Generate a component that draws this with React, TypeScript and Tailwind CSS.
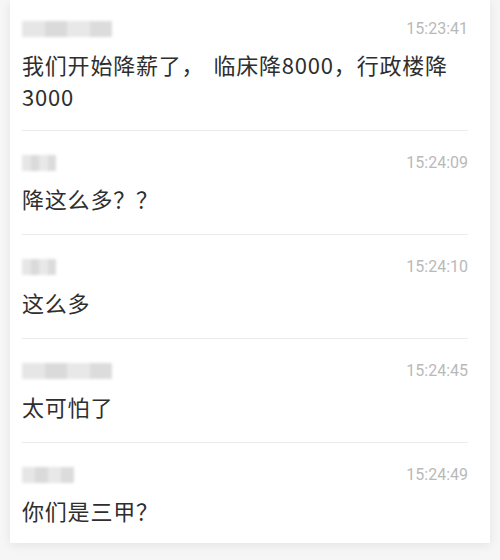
import React from "react";

type Msg = { nameW: number; time: string; text: React.ReactNode };

const msgs: Msg[] = [
  {
    nameW: 90,
    time: "15:23:41",
    text: (
      <>
        我们开始降薪了<span className="mr-[9px]">，</span>临床降8000，行政楼降3000
      </>
    ),
  },
  { nameW: 34, time: "15:24:09", text: "降这么多？？" },
  { nameW: 34, time: "15:24:10", text: "这么多" },
  { nameW: 90, time: "15:24:45", text: "太可怕了" },
  { nameW: 52, time: "15:24:49", text: "你们是三甲？" },
];

function BlurName({ w }: { w: number }) {
  return (
    <div className="relative h-[16px]" style={{ width: w }}>
      <div className="absolute inset-0 flex blur-[1.5px]">
        <div className="h-full flex-1 bg-[#e6e6e6]" />
        <div className="h-full flex-1 bg-[#dadada]" />
        <div className="h-full flex-1 bg-[#e8e8e8]" />
        <div className="h-full flex-1 bg-[#dcdcdc]" />
      </div>
    </div>
  );
}

export default function App() {
  return (
    <div
      className="min-h-[560px] w-[500px] bg-[#f6f6f6] pb-[17px]"
      style={{ fontFamily: '"Noto Sans CJK SC", "Noto Sans", sans-serif' }}
    >
      <div className="ml-[10px] w-[480px] bg-white px-[12px] shadow-[0_2px_10px_rgba(0,0,0,0.08)]">
        {msgs.map((m, i) => (
          <div
            key={i}
            className={
              (i === 0 ? "pt-[17px] pb-[18px] " : "pt-[20px] ") +
              (i === msgs.length - 1 ? "pb-[17px] " : "border-b border-[#ececec] ") +
              (i !== 0 && i !== msgs.length - 1 ? "pb-[20px] " : "") +
              "mr-[10px]"
            }
          >
            <div className="flex h-6 items-center justify-between">
              <BlurName w={m.nameW} />
              <span
                className="text-[16px] text-[#b9b9b9]"
                style={{ fontFamily: "Roboto, sans-serif" }}
              >
                {m.time}
              </span>
            </div>
            <div className="mt-[7px] text-[22px] leading-8 tracking-[0.8px] text-[#2e2e2e]">
              {m.text}
            </div>
          </div>
        ))}
      </div>
    </div>
  );
}
